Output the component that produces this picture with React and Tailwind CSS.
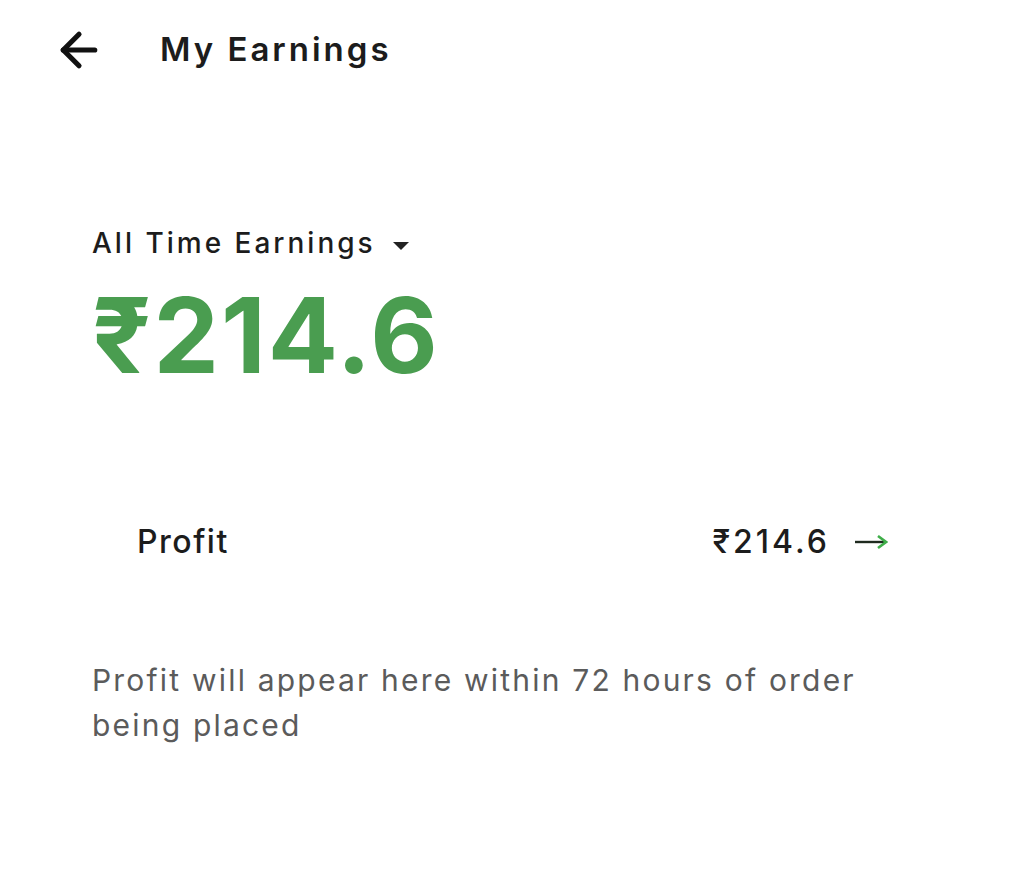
import { ArrowLeft } from 'lucide-react'

export default function App() {
  return (
    <div className="min-h-[880px] w-[1024px] bg-white font-['Inter','Liberation_Sans',sans-serif] text-[#1c1c1c]">
      <header className="flex h-[100px] items-center pl-[52px]">
        <ArrowLeft size={54} strokeWidth={2.3} className="text-[#111]" />
        <h1 className="ml-[54px] text-[33px] font-semibold tracking-[3px]">My Earnings</h1>
      </header>

      <section className="pl-[92px] pt-[123px]">
        <button type="button" className="flex items-center gap-[16px]">
          <span className="text-[28px] font-medium leading-[40px] tracking-[3px]">All Time Earnings</span>
          <svg width="18" height="9" viewBox="0 0 18 9" className="mt-[6px]">
            <path d="M1 0h16L9 8z" fill="#222" />
          </svg>
        </button>
        <p className="mt-[22px] text-[104px] font-bold leading-[100px] tracking-[2px] text-[#4a9d50]">₹214.6</p>
      </section>

      <div className="mt-[133px] flex items-center justify-between pl-[137px] pr-[136px]">
        <span className="text-[32px] font-medium tracking-[1.5px]">Profit</span>
        <div className="flex items-center gap-[24px]">
          <span className="text-[32px] font-medium tracking-[3px]">₹214.6</span>
          <svg width="34" height="16" viewBox="0 0 34 16">
            <path d="M1 8h30" stroke="#1f2a1f" strokeWidth="2.4" />
            <path d="M24 2l8 6-8 6" fill="none" stroke="#3fae49" strokeWidth="2.6" />
          </svg>
        </div>
      </div>

      <p className="mt-[92px] w-[860px] pl-[92px] text-[30px] leading-[45px] tracking-[2.2px] text-[#5b5b5b]">
        Profit will appear here within 72 hours of order being placed
      </p>
    </div>
  )
}
